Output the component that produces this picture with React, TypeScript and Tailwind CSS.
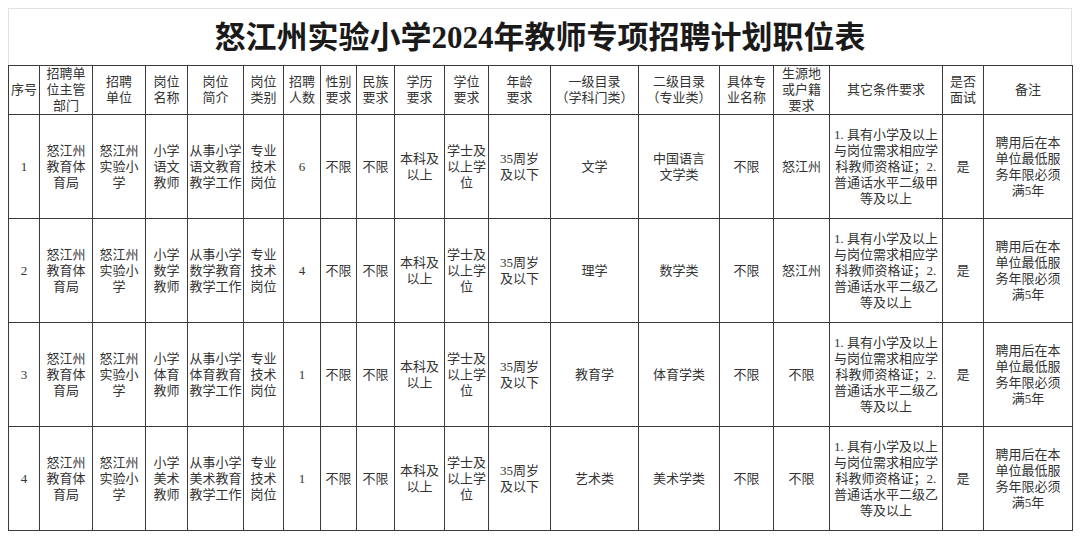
import React from "react";

const cols = [31, 53, 53, 42, 56, 40, 37, 36, 38, 50, 44, 62, 88, 81, 54, 56, 113, 41, 89];

const header: string[][] = [
  ["序号"],
  ["招聘单", "位主管", "部门"],
  ["招聘", "单位"],
  ["岗位", "名称"],
  ["岗位", "简介"],
  ["岗位", "类别"],
  ["招聘", "人数"],
  ["性别", "要求"],
  ["民族", "要求"],
  ["学历", "要求"],
  ["学位", "要求"],
  ["年龄", "要求"],
  ["一级目录", "（学科门类）"],
  ["二级目录", "（专业类）"],
  ["具体专", "业名称"],
  ["生源地", "或户籍", "要求"],
  ["其它条件要求"],
  ["是否", "面试"],
  ["备注"],
];

type Job = {
  no: string;
  subject: string;
  count: string;
  cat1: string;
  cat2: string;
  origin: string;
  level: string;
};

const jobs: Job[] = [
  { no: "1", subject: "语文", count: "6", cat1: "文学", cat2: "中国语言|文学类", origin: "怒江州", level: "甲" },
  { no: "2", subject: "数学", count: "4", cat1: "理学", cat2: "数学类", origin: "怒江州", level: "乙" },
  { no: "3", subject: "体育", count: "1", cat1: "教育学", cat2: "体育学类", origin: "不限", level: "乙" },
  { no: "4", subject: "美术", count: "1", cat1: "艺术类", cat2: "美术学类", origin: "不限", level: "乙" },
];

function rowCells(j: Job): string[][] {
  return [
    [j.no],
    ["怒江州", "教育体", "育局"],
    ["怒江州", "实验小", "学"],
    ["小学", j.subject, "教师"],
    ["从事小学", j.subject + "教育", "教学工作"],
    ["专业", "技术", "岗位"],
    [j.count],
    ["不限"],
    ["不限"],
    ["本科及", "以上"],
    ["学士及", "以上学", "位"],
    ["35周岁", "及以下"],
    [j.cat1],
    j.cat2.split("|"),
    ["不限"],
    [j.origin],
    ["1. 具有小学及以上", "与岗位需求相应学", "科教师资格证；2.", "普通话水平二级" + j.level, "等及以上"],
    ["是"],
    ["聘用后在本", "单位最低服", "务年限必须", "满5年"],
  ];
}

function Cell({ lines }: { lines: string[] }) {
  return (
    <td className="border border-[#3a3a3a] p-0 text-center align-middle">
      {lines.map((l, i) => (
        <div key={i} className="whitespace-nowrap leading-[16px]">
          {l}
        </div>
      ))}
    </td>
  );
}

export default function App() {
  return (
    <div
      className="w-[1080px] h-[539px] bg-white p-2 text-[13px] text-[#333]"
      style={{ fontFamily: '"Liberation Serif", "Noto Sans CJK SC", serif' }}
    >
      <div className="h-[57px] border border-b-0 border-[#e2e2e2] flex items-center justify-center">
        <h1 className="text-[31px] font-bold text-[#1a1a1a] mt-[2px]">
          怒江州实验小学2024年教师专项招聘计划职位表
        </h1>
      </div>
      <table className="table-fixed border-collapse w-[1064px] border border-[#3a3a3a]">
        <colgroup>
          {cols.map((w, i) => (
            <col key={i} style={{ width: w }} />
          ))}
        </colgroup>
        <tbody>
          <tr className="h-[49px]">
            {header.map((h, i) => (
              <Cell key={i} lines={h} />
            ))}
          </tr>
          {jobs.map((j) => (
            <tr key={j.no} className="h-[104px]">
              {rowCells(j).map((c, i) => (
                <Cell key={i} lines={c} />
              ))}
            </tr>
          ))}
        </tbody>
      </table>
    </div>
  );
}
